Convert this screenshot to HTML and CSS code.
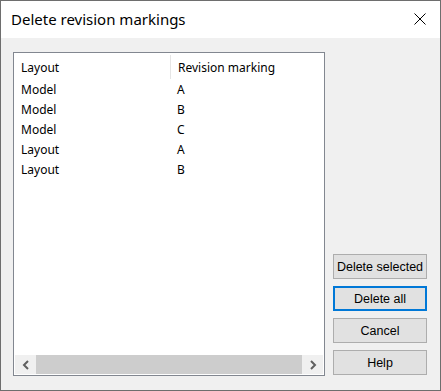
FILE: index.html
```html
<!DOCTYPE html>
<html lang="en">
  <head>
    <meta charset="UTF-8" />
    <title>Delete revision markings</title>
    <link rel="stylesheet" href="styles.css">
  </head>
  <body>
    <div class="window">
      <div class="titlebar">
        <span class="title">Delete revision markings</span>
        <span class="close">
          <svg width="12" height="12" viewBox="0 0 12 12">
            <path d="M0.5 0.5 L11.5 11.5 M11.5 0.5 L0.5 11.5" stroke="#000" stroke-width="1" fill="none" />
          </svg>
        </span>
      </div>
      <div class="content">
        <div class="listbox">
          <div class="list-inner">
            <div class="row header">
              <div class="col col-1">Layout</div>
              <div class="col col-2">Revision marking</div>
            </div>
            <div class="row"><div class="col col-1">Model</div><div class="col col-2">A</div></div>
            <div class="row"><div class="col col-1">Model</div><div class="col col-2">B</div></div>
            <div class="row"><div class="col col-1">Model</div><div class="col col-2">C</div></div>
            <div class="row"><div class="col col-1">Layout</div><div class="col col-2">A</div></div>
            <div class="row"><div class="col col-1">Layout</div><div class="col col-2">B</div></div>
          </div>
          <div class="hscroll">
            <span class="arrow">
              <svg width="8" height="10" viewBox="0 0 8 10"><path d="M6 1 L2 5 L6 9" stroke="#606060" stroke-width="2" fill="none" /></svg>
            </span>
            <span class="thumb"></span>
            <span class="arrow">
              <svg width="8" height="10" viewBox="0 0 8 10"><path d="M2 1 L6 5 L2 9" stroke="#606060" stroke-width="2" fill="none" /></svg>
            </span>
          </div>
        </div>
        <div class="buttons">
          <button class="btn">Delete selected</button>
          <button class="btn default">Delete all</button>
          <button class="btn">Cancel</button>
          <button class="btn">Help</button>
        </div>
      </div>
    </div>
  </body>
</html>
```

FILE: styles.css
```css
* {
  margin: 0;
  padding: 0;
  box-sizing: border-box;
}

body {
  background: #ffffff;
  font-family: "Noto Sans", sans-serif;
}

.window {
  width: 441px;
  height: 391px;
  border: 1px solid #6e6e6e;
  display: flex;
  flex-direction: column;
  background: #f0f0f0;
}

.titlebar {
  height: 37px;
  background: #fff;
  display: flex;
  align-items: center;
  justify-content: space-between;
  padding: 0 14px 0 10px;
}

.title {
  font-size: 15px;
  color: #000;
  padding-bottom: 2px;
}

.close {
  display: flex;
  padding-bottom: 2px;
}

.content {
  flex: 1;
  display: flex;
  padding: 14px 12px 14px 12px;
  gap: 8px;
}

.listbox {
  width: 312px;
  border: 1px solid #828790;
  background: #fff;
  display: flex;
  flex-direction: column;
}

.list-inner {
  flex: 1;
}

.row {
  display: flex;
  height: 20px;
  align-items: center;
  font-size: 12px;
  color: #000;
}

.row.header {
  height: 26px;
  padding-top: 2px;
}

.col-1 {
  width: 156px;
  padding-left: 7px;
}

.col-2 {
  padding-left: 7px;
}

.header .col-2 {
  border-left: 1px solid #e5e5e5;
  height: 24px;
  display: flex;
  align-items: center;
}

.hscroll {
  height: 19px;
  margin: 0 1px 1px 1px;
  background: #f0f0f0;
  display: flex;
  align-items: stretch;
}

.arrow {
  width: 21px;
  display: flex;
  align-items: center;
  justify-content: center;
}

.thumb {
  flex: 1;
  background: #cdcdcd;
}

.buttons {
  display: flex;
  flex-direction: column;
  justify-content: flex-end;
  gap: 7px;
  padding-bottom: 1px;
}

.btn {
  width: 94px;
  height: 25px;
  background: #e1e1e1;
  border: 1px solid #adadad;
  font-family: "Liberation Sans", sans-serif;
  font-size: 12.5px;
  color: #000;
}

.btn.default {
  border: 2px solid #0078d7;
}
```
